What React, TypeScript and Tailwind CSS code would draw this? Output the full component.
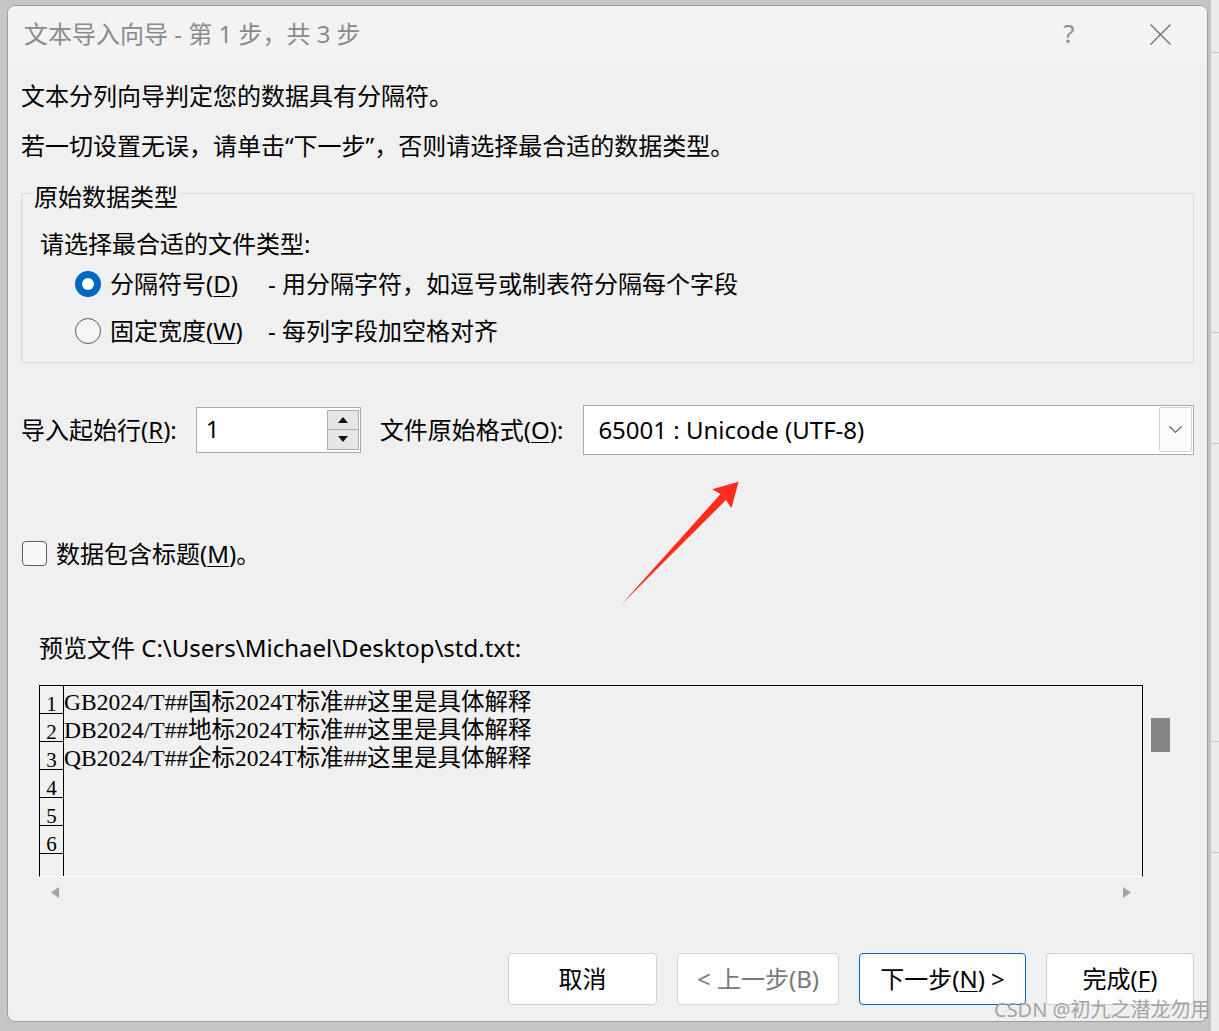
import React from 'react';

const previewLines = [
  'GB2024/T##国标2024T标准##这里是具体解释',
  'DB2024/T##地标2024T标准##这里是具体解释',
  'QB2024/T##企标2024T标准##这里是具体解释',
  '',
  '',
  '',
];

function Key({ children }: { children: React.ReactNode }) {
  return <u className="underline decoration-1 underline-offset-[3px]">{children}</u>;
}

function Radio({ checked }: { checked: boolean }) {
  if (checked) {
    return (
      <span className="flex h-[26px] w-[26px] shrink-0 items-center justify-center rounded-full bg-[#0067c0]">
        <span className="h-[12px] w-[12px] rounded-full bg-white" />
      </span>
    );
  }
  return <span className="h-[26px] w-[26px] shrink-0 rounded-full border border-[#5c5c5c] bg-[#f6f6f6]" />;
}

function TitleBar() {
  return (
    <div className="flex h-[56px] shrink-0 items-center bg-[#f3f3f3] pl-[16px]">
      <span className="text-[#8a8a8a]">文本导入向导 - 第 1 步，共 3 步</span>
      <span className="ml-auto w-[40px] text-center text-[25px] text-[#8c8c8c]">?</span>
      <svg className="ml-[61px] mr-[36px]" width="21" height="21" viewBox="0 0 21 21">
        <path d="M0.5 0.5 L20.5 20.5 M20.5 0.5 L0.5 20.5" stroke="#6f6f6f" strokeWidth="1.3" fill="none" />
      </svg>
    </div>
  );
}

function SpinBox() {
  return (
    <div className="ml-[19px] flex h-[46px] w-[165px] shrink-0 border border-[#a9a9a9] bg-white">
      <span className="flex-1 pl-[9px] leading-[42px]">1</span>
      <div className="mr-px flex w-[32px] flex-col pt-[2px]">
        <span className="flex h-[20px] items-center justify-center border border-[#adadad] bg-[#e6e6e6]">
          <svg width="10" height="6" viewBox="0 0 10 6">
            <polygon points="0,6 5,0 10,6" fill="#111" />
          </svg>
        </span>
        <span className="flex h-[20px] items-center justify-center border border-t-0 border-[#adadad] bg-[#e6e6e6]">
          <svg width="10" height="6" viewBox="0 0 10 6">
            <polygon points="0,0 10,0 5,6" fill="#111" />
          </svg>
        </span>
      </div>
    </div>
  );
}

function EncodingSelect() {
  return (
    <div className="ml-[20px] flex h-[50px] flex-1 items-center border border-[#a9a9a9] bg-white pl-[14px]">
      <span className="flex-1">65001 : Unicode (UTF-8)</span>
      <span className="mr-[1px] flex h-[45px] w-[33px] items-center justify-center rounded-[2px] border border-[#d4d4d4] bg-[#fbfbfb]">
        <svg width="13" height="7" viewBox="0 0 13 7">
          <path d="M0.5 0.5 L6.5 6.3 L12.5 0.5" stroke="#555" strokeWidth="1.1" fill="none" />
        </svg>
      </span>
    </div>
  );
}

function Preview() {
  return (
    <>
      <div className="mt-[21px] flex pl-[18px]">
        <div className="flex h-[192px] w-[1104px] shrink-0 flex-col overflow-hidden border-b border-l border-r border-t border-black border-b-white">
          {previewLines.map((line, i) => (
            <div key={i} className="flex h-[28px] shrink-0">
              <div className="h-[28px] w-[24px] shrink-0 border-b border-r border-black pt-[9px] text-center font-['Liberation_Serif',serif] text-[21px] leading-[18px]">
                {i + 1}
              </div>
              <div className="whitespace-pre pt-[2px] font-['Liberation_Serif','Noto_Sans_CJK_SC',serif] text-[23.5px] leading-[28px]">
                {line}
              </div>
            </div>
          ))}
          <div className="w-[24px] flex-1 border-r border-black" />
        </div>
        <div className="ml-[8px] pt-[33px]">
          <div className="h-[34px] w-[19px] bg-[#858585]" />
        </div>
      </div>
      <div className="ml-[18px] flex h-[32px] w-[1104px] items-center justify-between px-[12px]">
        <svg width="8" height="11" viewBox="0 0 8 11">
          <polygon points="8,0 8,11 0,5.5" fill="#a3a3a3" />
        </svg>
        <svg width="8" height="11" viewBox="0 0 8 11">
          <polygon points="0,0 0,11 8,5.5" fill="#a3a3a3" />
        </svg>
      </div>
    </>
  );
}

function Buttons() {
  const base = 'flex h-[52px] items-center justify-center rounded-[4px] border bg-[#fdfdfd]';
  return (
    <div className="mt-[44px] flex justify-end gap-[20px]">
      <div className={`${base} w-[149px] border-[#d0d0d0]`}>取消</div>
      <div className={`${base} w-[162px] border-[#d6d6d6] text-[#7a7a7a]`}>&lt; 上一步(B)</div>
      <div className={`${base} w-[167px] border-[#0067c0]`}>
        <span>
          下一步(<Key>N</Key>) &gt;
        </span>
      </div>
      <div className={`${base} w-[148px] border-[#d0d0d0]`}>
        <span>
          完成(<Key>F</Key>)
        </span>
      </div>
    </div>
  );
}

function Arrow() {
  return (
    <svg className="absolute left-[605px] top-[470px]" width="140" height="140" viewBox="0 0 140 140">
      <polygon points="7.9,129 107.5,18 99.1,13.3 125.6,5.7 118.4,32.3 113,24" fill="#ff2b1c" />
    </svg>
  );
}

function RightStrip() {
  const rows = [53, 280, 111, 298, 111];
  return (
    <div className="flex h-[1031px] flex-1 flex-col border-l-[3px] border-[#c4c4c4] bg-[#ececec]">
      {rows.map((h, i) => (
        <div key={i} className="shrink-0 border-b border-[#c8c8c8]" style={{ height: h }} />
      ))}
    </div>
  );
}

export default function App() {
  return (
    <div className="relative flex h-[1031px] w-[1219px] items-start overflow-hidden bg-[#c6c6c6] font-['Noto_Sans','Noto_Sans_CJK_SC',sans-serif] text-[24px] text-black">
      <div className="relative ml-[7px] mt-[5px] flex h-[1017px] w-[1201px] shrink-0 flex-col overflow-hidden rounded-[8px] border border-[#9d9d9d] bg-[#f0f0f0]">
        <TitleBar />
        <div className="flex flex-col pl-[13px] pr-[13px]">
          <p className="mt-[18px] h-[32px] leading-[32px]">文本分列向导判定您的数据具有分隔符。</p>
          <p className="mt-[18px] h-[32px] leading-[32px]">若一切设置无误，请单击“下一步”，否则请选择最合适的数据类型。</p>

          <fieldset className="mt-[11.5px] border border-[#dadada]">
            <legend className="ml-[10px] px-[2px] pt-[7px] leading-[32px]">原始数据类型</legend>
            <div className="pb-[15px] pl-[18px]">
              <p className="mt-[15px] h-[32px] leading-[32px]">请选择最合适的文件类型:</p>
              <div className="mt-[8px] flex h-[32px] items-center pl-[35px]">
                <Radio checked />
                <span className="ml-[9px] w-[158px] shrink-0">
                  分隔符号(<Key>D</Key>)
                </span>
                <span>- 用分隔字符，如逗号或制表符分隔每个字段</span>
              </div>
              <div className="mt-[15px] flex h-[32px] items-center pl-[35px]">
                <Radio checked={false} />
                <span className="ml-[9px] w-[158px] shrink-0">
                  固定宽度(<Key>W</Key>)
                </span>
                <span>- 每列字段加空格对齐</span>
              </div>
            </div>
          </fieldset>

          <div className="mt-[42px] flex h-[50px] items-center">
            <span className="shrink-0">
              导入起始行(<Key>R</Key>):
            </span>
            <SpinBox />
            <span className="ml-[19px] shrink-0">
              文件原始格式(<Key>O</Key>):
            </span>
            <EncodingSelect />
          </div>

          <div className="mt-[83px] flex h-[32px] items-center pl-[1px]">
            <span className="h-[25px] w-[25px] shrink-0 rounded-[4px] border border-[#5d5d5d] bg-[#f8f8f8]" />
            <span className="ml-[9px]">
              数据包含标题(<Key>M</Key>)。
            </span>
          </div>

          <p className="mt-[62px] h-[32px] pl-[18px] leading-[32px]">预览文件 C:\Users\Michael\Desktop\std.txt:</p>

          <Preview />
          <Buttons />
        </div>
        <Arrow />
      </div>
      <RightStrip />
      <div className="absolute left-[994px] top-[998px] whitespace-nowrap text-[20px] leading-[24px] text-[#a3a3a3]">
        CSDN @初九之潜龙勿用
      </div>
    </div>
  );
}
